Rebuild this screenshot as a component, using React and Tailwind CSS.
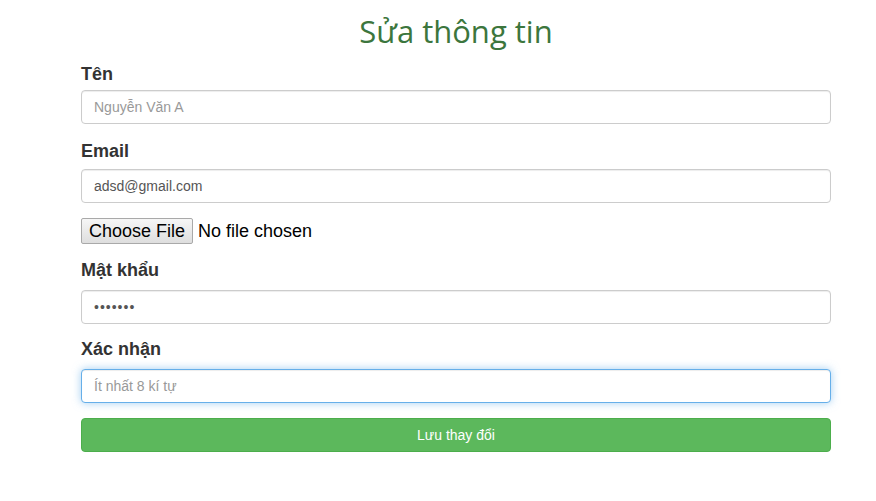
import React from "react";

function Label({ children, className = "" }) {
  return (
    <label className={"block text-[18px] leading-[26px] font-bold text-[#333] " + className}>
      {children}
    </label>
  );
}

const inputBase =
  "block w-full h-[34px] px-3 rounded-[4px] border bg-white text-[14px] text-[#555] outline-none placeholder:text-[#999]";

export default function App() {
  return (
    <div className="min-h-screen bg-white font-['Liberation_Sans',Arial,sans-serif]">
      <div className="ml-[81px] w-[750px] pt-[10px]">
        <h2 className="text-center text-[31px] leading-[42px] text-[#3c763d] font-['Open_Sans',sans-serif]">
          Sửa thông tin
        </h2>

        {/* ten */}
        <Label className="mt-[9px]">Tên</Label>
        <input
          className={inputBase + " mt-[3px] border-[#ccc] shadow-[inset_0_1px_1px_rgba(0,0,0,0.075)]"}
          placeholder="Nguyễn Văn A"
        />

        {/* email */}
        <Label className="mt-[14px]">Email</Label>
        <input
          className={inputBase + " mt-[5px] border-[#ccc] shadow-[inset_0_1px_1px_rgba(0,0,0,0.075)]"}
          defaultValue="adsd@gmail.com"
        />

        {/* file */}
        <div className="mt-[15px] flex items-center h-[26px] text-[18px] text-black">
          <span className="h-[26px] w-[112px] flex items-center justify-center border border-[#a9a9a9] rounded-[2px] bg-gradient-to-b from-[#f6f6f6] to-[#dedede]">
            Choose File
          </span>
          <span className="ml-[5px]">No file chosen</span>
        </div>

        {/* mat khau */}
        <Label className="mt-[13px]">Mật khẩu</Label>
        <input
          type="password"
          className={inputBase + " mt-[7px] border-[#ccc] shadow-[inset_0_1px_1px_rgba(0,0,0,0.075)] text-[8px] tracking-[1px]"}
          defaultValue="1234567"
        />

        {/* xac nhan */}
        <Label className="mt-[12px]">Xác nhận</Label>
        <input
          type="password"
          className={inputBase + " mt-[7px] border-[#66afe9] shadow-[inset_0_1px_1px_rgba(0,0,0,0.075),0_0_8px_rgba(102,175,233,0.6)]"}
          placeholder="Ít nhất 8 kí tự"
        />

        <button className="mt-[15px] block w-full h-[34px] rounded-[4px] border border-[#4cae4c] bg-[#5cb85c] text-white text-[14px]">
          Lưu thay đổi
        </button>
      </div>
    </div>
  );
}
